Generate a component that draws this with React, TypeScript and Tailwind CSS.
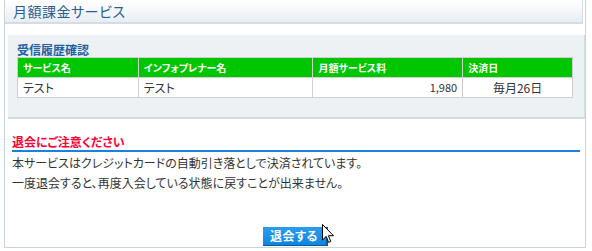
import React from "react";

const jp = { fontFamily: '"Noto Sans CJK JP", "Noto Sans", sans-serif', fontFeatureSettings: '"palt"' } as React.CSSProperties;

function Cursor() {
  return (
    <svg className="absolute left-[59px] top-[2px]" width="13" height="20" viewBox="0 0 13 20">
      <path d="M0.5 0.5 L0.5 16 L4.2 12.4 L6.6 18.4 L8.8 17.5 L6.4 11.7 L11.5 11.7 Z" fill="#fff" stroke="#000" strokeWidth="1" strokeLinejoin="miter" />
    </svg>
  );
}

export default function App() {
  return (
    <div className="w-[592px] h-[251px] bg-white overflow-hidden text-[#333]" style={jp}>
      <div className="ml-[4px] w-[582px] h-[248px] border-l border-r border-b border-[#c9d4dc] flex flex-col">
        {/* header */}
        <div className="mr-[2px] h-[24px] border-r border-b-2 border-[#d3dde6] bg-gradient-to-b from-white to-[#e9eef3] flex items-center pl-[8px]">
          <span className="text-[14px] leading-none text-[#2a5c8e] tracking-[0.5px]">月額課金サービス</span>
        </div>
        {/* receipt history */}
        <div className="mt-[11px] ml-[3px] bg-[#edf1f4] border-r border-b-2 border-[#d2dde2] pt-[7px] pl-[9px] pr-[11px] pb-[19px]">
          <div className="text-[12px] font-bold leading-[15px] text-[#2160a2]">受信履歴確認</div>
          <table className="w-[556px] border-collapse bg-white text-[12px]">
            <colgroup>
              <col className="w-[121px]" />
              <col className="w-[175px]" />
              <col className="w-[150px]" />
              <col className="w-[110px]" />
            </colgroup>
            <thead>
              <tr className="bg-[#00c600] h-[20px]">
                <th className="border border-[#cfcfcf] text-left pl-[5px] text-[10px] font-bold text-white leading-none">サービス名</th>
                <th className="border border-[#cfcfcf] text-left pl-[5px] text-[10px] font-bold text-white leading-none">インフォプレナー名</th>
                <th className="border border-[#cfcfcf] text-left pl-[5px] text-[10px] font-bold text-white leading-none">月額サービス料</th>
                <th className="border border-[#cfcfcf] text-left pl-[5px] text-[10px] font-bold text-white leading-none">決済日</th>
              </tr>
            </thead>
            <tbody>
              <tr className="h-[20px]">
                <td className="border border-[#cfcfcf] pl-[5px] leading-none">テスト</td>
                <td className="border border-[#cfcfcf] pl-[5px] leading-none">テスト</td>
                <td className="border border-[#cfcfcf] pr-[5px] text-right leading-none text-[11px]">1,980</td>
                <td className="border border-[#cfcfcf] text-center leading-none">毎月26日</td>
              </tr>
            </tbody>
          </table>
        </div>
        {/* notice */}
        <div className="mt-[15px] ml-[7px] mr-[5px]">
          <div className="text-[12px] font-bold leading-[16px] text-[#ff0033] border-b-2 border-[#1a82de]">退会にご注意ください</div>
          <p className="mt-[1px] text-[12px] leading-[20px]">本サービスはクレジットカードの自動引き落としで決済されています。</p>
          <p className="text-[12px] leading-[20px]">一度退会すると、再度入会している状態に戻すことが出来ません。</p>
        </div>
        <div className="flex-1" />
        <div className="flex justify-center pb-[1px]">
          <div className="relative">
            <button className="w-[65px] h-[19px] bg-gradient-to-b from-[#2a9cf0] to-[#0c86e0] border-r-2 border-b border-[#0b5a9e] text-white text-[12px] font-bold leading-none tracking-[0.5px]">
              退会する
            </button>
            <Cursor />
          </div>
        </div>
      </div>
    </div>
  );
}
